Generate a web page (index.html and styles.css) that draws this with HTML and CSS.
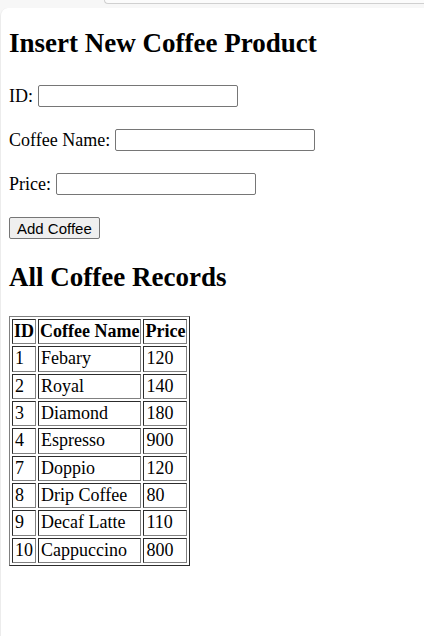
FILE: index.html
```html
<!DOCTYPE html>
<html>
<head>
<meta charset="utf-8">
<title>Coffee</title>
<link rel="stylesheet" href="styles.css">
</head>
<body>
<div class="chrome">
  <div class="bar"></div>
</div>
<div class="page">
  <h1 class="title">Insert New Coffee Product</h1>
  <form class="form">
    <div class="row"><label>ID:</label><input class="field" type="text"></div>
    <div class="row"><label>Coffee Name:</label><input class="field" type="text"></div>
    <div class="row"><label>Price:</label><input class="field" type="text"></div>
    <div class="row"><button class="btn" type="button">Add Coffee</button></div>
  </form>
  <h2 class="subtitle">All Coffee Records</h2>
  <table class="records">
    <tr><th>ID</th><th>Coffee Name</th><th>Price</th></tr>
    <tr><td>1</td><td>Febary</td><td>120</td></tr>
    <tr><td>2</td><td>Royal</td><td>140</td></tr>
    <tr><td>3</td><td>Diamond</td><td>180</td></tr>
    <tr><td>4</td><td>Espresso</td><td>900</td></tr>
    <tr><td>7</td><td>Doppio</td><td>120</td></tr>
    <tr><td>8</td><td>Drip Coffee</td><td>80</td></tr>
    <tr><td>9</td><td>Decaf Latte</td><td>110</td></tr>
    <tr><td>10</td><td>Cappuccino</td><td>800</td></tr>
  </table>
</div>
</body>
</html>
```
FILE: styles.css
```css
html, body {
  margin: 0;
  padding: 0;
  background: #f7f7f7;
  height: 100%;
}
body {
  display: flex;
  flex-direction: column;
  font-family: "Liberation Serif", "Times New Roman", serif;
  font-size: 18px;
  color: #000;
}
.chrome {
  height: 8px;
  flex: none;
  display: flex;
}
.bar {
  margin-left: 104px;
  flex: 1;
  height: 3px;
  background: #fbfbfb;
  border-bottom: 1px solid #d0d0d0;
  border-left: 1px solid #d0d0d0;
  border-bottom-left-radius: 8px;
}
.page {
  flex: 1;
  background: #fff;
  border-top-left-radius: 8px;
  border-left: 1px solid #ececec;
  padding: 9px 8px 9px 8px;
}
.title {
  font-size: 27px;
  line-height: 31px;
  font-weight: bold;
  margin: 11px 0 26px;
}
.form {
  margin: 0;
}
.row {
  display: flex;
  align-items: center;
  gap: 5px;
  height: 22px;
  margin-bottom: 22px;
}
.row:last-child {
  margin-bottom: 0;
}
.field {
  box-sizing: border-box;
  width: 200px;
  height: 22px;
  margin: 0;
  padding: 1px 3px;
  border: 1px solid #767676;
  border-radius: 2px;
  background: #fff;
  font-family: "Liberation Sans", Arial, sans-serif;
  font-size: 15px;
}
.btn {
  box-sizing: border-box;
  height: 22px;
  margin: 0;
  padding: 0 7px;
  border: 1px solid #767676;
  border-radius: 2px;
  background: #efefef;
  color: #000;
  font-family: "Liberation Sans", Arial, sans-serif;
  font-size: 15px;
}
.subtitle {
  font-size: 27px;
  line-height: 31px;
  font-weight: bold;
  margin: 23px 0 23px;
}
.records {
  border: 1px outset #808080;
  border-spacing: 2px;
  border-collapse: separate;
}
.records th, .records td {
  border: 1px inset #808080;
  padding: 1px 1px 1px 2px;
  line-height: 21.33px;
  text-align: left;
}
.records th {
  text-align: center;
  padding: 1px;
}
```
